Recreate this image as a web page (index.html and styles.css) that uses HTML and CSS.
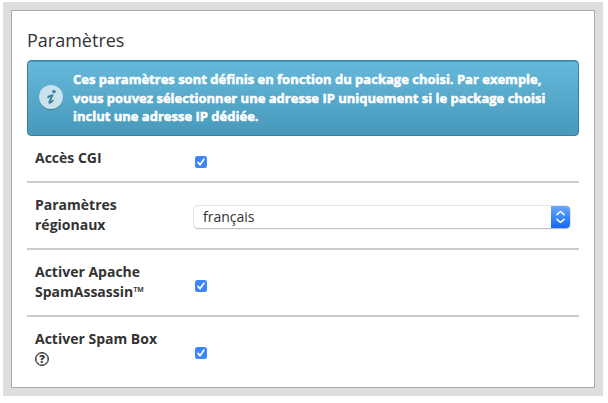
FILE: index.html
```html
<!DOCTYPE html>
<html lang="fr">
<head>
    <meta charset="UTF-8">
    <meta name="viewport" content="width=device-width, initial-scale=1.0">
    <title>Paramètres</title>
    <link rel="stylesheet" href="styles.css">
</head>
<body>
    <div class="wrapper">
        <div class="panel">
            <h1>Paramètres</h1>

            <div class="alert">
                <svg class="alert-icon" width="26" height="26" viewBox="0 0 26 26">
                    <circle cx="13" cy="13" r="12" fill="#34788f" opacity="0.75"/>
                    <circle cx="13" cy="12" r="12" fill="#c9e3ed"/>
                    <ellipse cx="15.900" cy="6.600" rx="1.900" ry="1.600" fill="#3b7f98"/>
                    <path d="M10 12.200c1.300-1.100 2.600-1.600 4.300-1.700l-2.900 6.300c-.6 1.500 1.200 1.400 3.400-1.300" fill="none" stroke="#3b7f98" stroke-width="1.800" stroke-linecap="round"/>
                </svg>
                <p>Ces paramètres sont définis en fonction du package choisi. Par exemple,<br>
                vous pouvez sélectionner une adresse IP uniquement si le package choisi<br>
                inclut une adresse IP dédiée.</p>
            </div>

            <div class="row row-first">
                <div class="label">Accès CGI</div>
                <div class="field">
                    <span class="checkbox"><svg width="12" height="12" viewBox="0 0 12 12"><path d="M3 6.400L5 8.700 8.900 3.200"/></svg></span>
                </div>
            </div>

            <div class="row">
                <div class="label">Paramètres<br>régionaux</div>
                <div class="field">
                    <div class="select">
                        <span class="select-value">français</span>
                        <span class="select-arrows"><svg width="19" height="22" viewBox="0 0 19 22"><path d="M6 8.600L9.500 5.500 13 8.600M6 13.400L9.500 16.500 13 13.400"/></svg></span>
                    </div>
                </div>
            </div>

            <div class="row">
                <div class="label">Activer Apache<br>SpamAssassin™</div>
                <div class="field">
                    <span class="checkbox"><svg width="12" height="12" viewBox="0 0 12 12"><path d="M3 6.400L5 8.700 8.900 3.200"/></svg></span>
                </div>
            </div>

            <div class="row">
                <div class="label">Activer Spam Box<br><span class="help">?</span></div>
                <div class="field">
                    <span class="checkbox"><svg width="12" height="12" viewBox="0 0 12 12"><path d="M3 6.400L5 8.700 8.900 3.200"/></svg></span>
                </div>
            </div>
        </div>
    </div>
</body>
</html>
```

FILE: styles.css
```css
* {
    margin: 0;
    padding: 0;
    box-sizing: border-box;
}

body {
    font-family: 'Open Sans', sans-serif;
    font-size: 14px;
    line-height: 20px;
    color: #333;
    background: #fff;
    overflow: hidden;
}

.wrapper {
    width: 600px;
    height: 394px;
    margin: 2px 0 0 3px;
    padding: 8px;
    background: #ddd;
}

.panel {
    height: 378px;
    padding: 17px 15px 0;
    background: #fff;
    border: 1px solid #aaa;
}

h1 {
    height: 32px;
    font-size: 18px;
    font-weight: normal;
    line-height: 24px;
}

.alert {
    display: flex;
    align-items: center;
    height: 76px;
    padding-left: 10px;
    color: #fff;
    background: linear-gradient(#66b9da, #4799bb);
    border: 1px solid #3a819d;
    border-radius: 4px;
    box-shadow: inset 0 1px 0 #4b9aba;
}

.alert-icon {
    flex: none;
    margin-right: 9px;
}

.alert p {
    font-size: 13px;
    font-weight: bold;
    line-height: 18.5px;
    white-space: nowrap;
    -webkit-text-stroke: 0.5px #fff;
}

.row {
    display: flex;
    align-items: center;
    height: 67px;
    padding: 0 8px 2px;
    border-top: 2px solid #ccc;
}

.row-first {
    height: 45px;
    border-top: none;
}

.label {
    width: 159px;
    font-weight: bold;
}

.field {
    flex: 1;
}

.checkbox {
    display: block;
    width: 12px;
    height: 12px;
    margin: 8px 0 0 1px;
    background: #3b86fb;
    border-radius: 2.5px;
}

.checkbox svg {
    display: block;
}

.checkbox path {
    fill: none;
    stroke: #fff;
    stroke-width: 1.7;
    stroke-linecap: round;
}

.select {
    display: flex;
    justify-content: space-between;
    width: 376px;
    height: 22px;
    margin-top: 4px;
    background: #fff;
    border-radius: 4px;
    box-shadow: 0 0 0 0.5px #ccc, 0 1px 1px #aaa;
}

.select-value {
    padding-left: 9px;
    line-height: 21px;
}

.select-arrows {
    width: 19px;
    background: linear-gradient(#6aa8fb, #1167fb);
    border-radius: 0 4px 4px 0;
}

.select-arrows svg {
    display: block;
}

.select-arrows path {
    fill: none;
    stroke: #fff;
    stroke-width: 1.6;
    stroke-linecap: round;
    stroke-linejoin: round;
}

.help {
    display: block;
    width: 14px;
    height: 14px;
    margin: 3px 0;
    border: 1px solid #333;
    border-radius: 50%;
    box-shadow: inset 0 0 0 0.5px #333;
    font-size: 11px;
    font-weight: 800;
    line-height: 12px;
    text-align: center;
}
```
